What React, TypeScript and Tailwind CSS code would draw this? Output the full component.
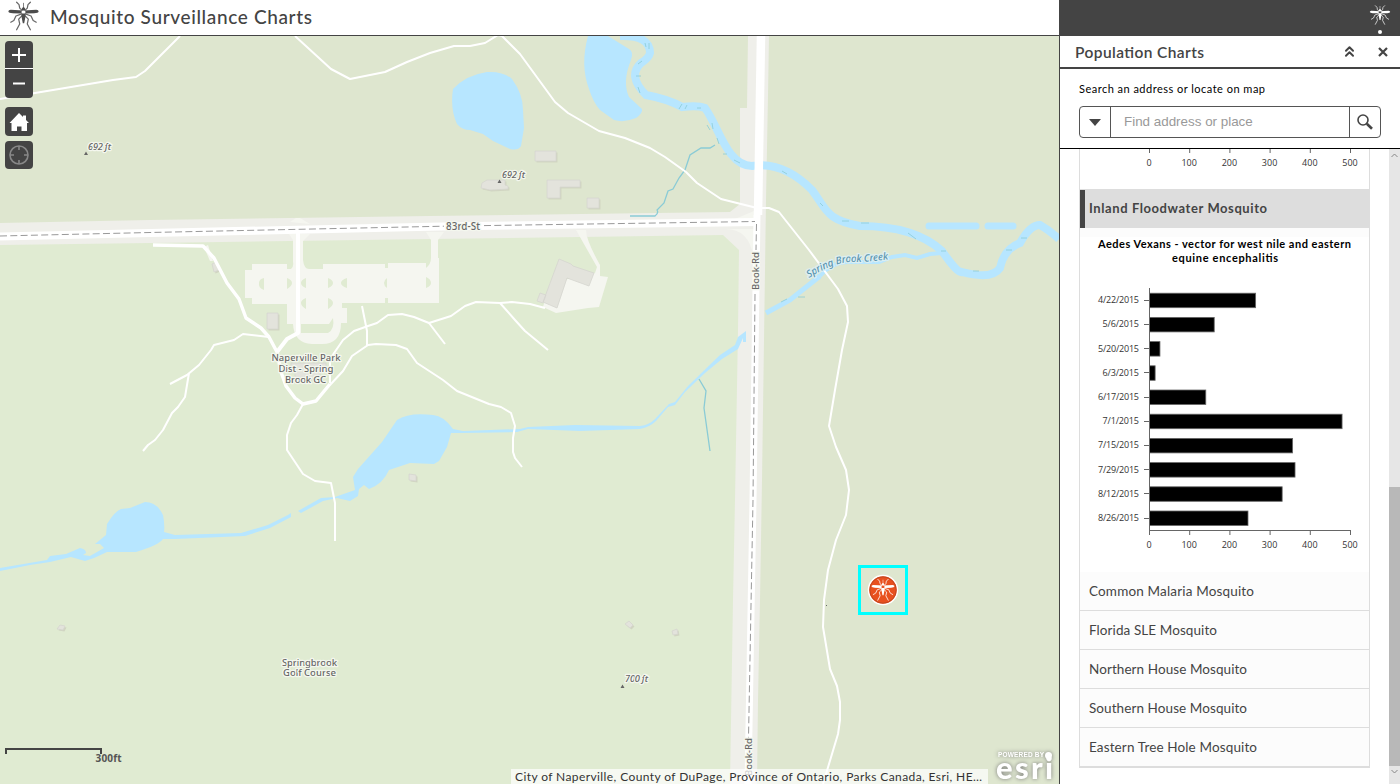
import { ChevronsUp } from "lucide-react";

const COUNTS = [
  { date: "4/22/2015", count: 264 },
  { date: "5/6/2015", count: 161 },
  { date: "5/20/2015", count: 26 },
  { date: "6/3/2015", count: 14 },
  { date: "6/17/2015", count: 140 },
  { date: "7/1/2015", count: 479 },
  { date: "7/15/2015", count: 356 },
  { date: "7/29/2015", count: 362 },
  { date: "8/12/2015", count: 330 },
  { date: "8/26/2015", count: 245 },
];

const TICKS = [0, 100, 200, 300, 400, 500];

const SPECIES = [
  { name: "Common Malaria Mosquito", width: 165 },
  { name: "Florida SLE Mosquito", width: 128 },
  { name: "Northern House Mosquito", width: 158 },
  { name: "Southern House Mosquito", width: 158 },
  { name: "Eastern Tree Hole Mosquito", width: 168 },
];

const PATHS = [
  "M0 99 L35 93 L113 80 L136 77 L145 71 L180 36",
  "M295 36 L331 69 L350 79 L385 72 L407 62 L430 53 L454 46 L470 46 L485 43 L498 35 L502 36 L520 54 L555 102 L568 113 L599 131 L625 138 L650 148 L665 157 L686 172 L697 183 L721 199 L757 208 L769 208 L779 212 L809 250 L838 289 L847 306 L848 322 L842 350 L835 390 L829 426 L836 447 L846 470 L849 490 L846 515 L836 540 L828 570 L824 600 L823 627 L830 669 L837 686 L840 702 L840 720 L838 734 L823 784",
  "M269 337 L243 334 L234 340 L214 345 L211 350 L199 365 L187 375 L170 384",
  "M189 373 L185 397 L178 407 L172 413 L163 430 L155 440 L148 445 L143 451",
  "M303 404 L297 415 L291 423 L287 435 L287 450 L303 474 L315 481 L331 483 L335 503 L335 541",
  "M330 383 L330 359 L343 340 L354 331 L368 326 L377 323 L388 315 L402 314 L414 317 L429 323 L451 316 L465 306 L476 302 L500 303 L512 302 L530 304 L545 308",
  "M330 385 L343 371 L352 356 L368 345 L376 344 L396 345 L407 349 L417 363 L443 380 L457 391 L489 404 L501 407 L511 413 L515 426 L513 438 L513 452 L515 458 L522 467",
  "M362 306 L367 331 L367 345",
  "M429 323 L445 344",
  "M500 303 L515 320 L525 331 L548 350",
];

export default function App() {
  return (
    <div className="flex h-[784px] w-[1400px] overflow-hidden bg-white font-['Lato',sans-serif] text-[#444]">
      <div className="flex w-[1059px] flex-col">
        <header className="flex h-9 items-center border-b border-[#444] pl-2">
          <Mosquito className="-mt-1 h-[30px] w-[31px] text-[#4c4c4c]" />
          <h1 className="-mt-0.5 ml-[11px]">
            <Label width={262} text="Mosquito Surveillance Charts" className="h-6 text-[19px]" baseline={18.5} weight={500} />
          </h1>
        </header>
        <MapView />
      </div>
      <aside className="flex w-[341px] flex-col border-l border-[#444]">
        <div className="flex h-9 shrink-0 justify-end bg-[#444] pr-[9px]">
          <div className="flex flex-col items-center pt-[5px]">
            <Mosquito className="h-5 w-[22px] text-white" />
            <span className="mt-[5px] h-1 w-1 rounded-full bg-white" />
          </div>
        </div>
        <div className="flex h-[33px] shrink-0 items-center border-b-2 border-[#444] pl-[15px] pr-3">
          <Label width={129} text="Population Charts" className="h-6 grow text-[15.5px]" baseline={18} weight={600} />
          <ChevronsUp className="mr-5 h-[17px] w-[17px]" strokeWidth={2.7} />
          <svg viewBox="0 0 10 10" className="h-2.5 w-2.5" stroke="currentColor" strokeWidth="2.2">
            <path d="M1 1 L9 9 M9 1 L1 9" />
          </svg>
        </div>
        <div className="flex h-20 shrink-0 flex-col border-b border-black pl-[19px] pt-3">
          <Label width={186} text="Search an address or locate on map" className="h-4 text-[11px] text-black" baseline={12} />
          <SearchBox />
        </div>
        <div className="flex min-h-0 grow">
          <div className="ml-[19px] w-[291px]">
            <Accordion />
          </div>
          <Scrollbar />
        </div>
      </aside>
    </div>
  );
}

type LabelProps = { width: number; text: string; className: string; baseline: number; weight?: number };

// single line of text fitted to a fixed advance width
function Label({ width, text, className, baseline, weight = 400 }: LabelProps) {
  return (
    <svg className={`block ${className}`} width={width} fill="currentColor" fontWeight={weight}>
      <text x="0" y={baseline} textLength={width}>{text}</text>
    </svg>
  );
}

function SearchBox() {
  return (
    <div className="mt-[9px] flex h-8 w-[302px] rounded border border-[#555]">
      <div className="flex w-[31px] items-center justify-center border-r border-[#555]">
        <svg viewBox="0 0 12 7" className="h-[7px] w-3" fill="#444"><path d="M0 0 H12 L6 7 Z" /></svg>
      </div>
      <div className="flex grow items-center pl-[13px] font-['Liberation_Sans',sans-serif] text-[13.4px] text-[#999]">
        Find address or place
      </div>
      <div className="flex w-[31px] items-center justify-center border-l border-[#555]">
        <svg viewBox="0 0 16 16" className="h-4 w-4" fill="none" stroke="#444">
          <circle cx="6" cy="6" r="5" strokeWidth="1.6" />
          <path d="M9.8 9.8 L15 14.8" strokeWidth="2.6" />
        </svg>
      </div>
    </div>
  );
}

function Accordion() {
  return (
    <div className="border-x border-b-2 border-[#ddd]">
      <svg className="block h-10 w-full" viewBox="0 149 289 40">
        <XAxis y={148} />
      </svg>
      <div className="flex h-[39px] items-center bg-[#ddd] pt-px">
        <span className="h-[38px] w-[5px] bg-[#444]" />
        <div className="ml-1">
          <Label width={178} text="Inland Floodwater Mosquito" className="h-5 text-[13px]" baseline={14} weight={700} />
        </div>
      </div>
      <Chart />
      {SPECIES.map((s, i) => (
        <div
          key={s.name}
          className={`flex items-center bg-[#fcfcfc] pl-[9px] ${i < SPECIES.length - 1 ? "h-[39px] border-b border-[#ddd]" : "h-[38px]"}`}
        >
          <Label width={s.width} text={s.name} className="h-5 text-[13.5px]" baseline={15} />
        </div>
      ))}
    </div>
  );
}

function XAxis({ y }: { y: number }) {
  return (
    <g fontSize="9" fill="#333" textAnchor="middle" fontFamily="Open Sans">
      {TICKS.map((t) => (
        <g key={t}>
          <path d={`M${69.5 + t * 0.402} ${y} v5`} stroke="#666" />
          <text x={69 + t * 0.402} y={y + 18} textLength={t ? 15.5 : 5}>{t}</text>
        </g>
      ))}
    </g>
  );
}

function Chart() {
  return (
    <svg className="block h-[344px] w-full" viewBox="0 228 289 344">
      <rect y="228" width="289" height="9" fill="#fcfcfc" />
      <g fontSize="11" fontWeight="700" fill="#000">
        <text x="18" y="248" textLength="253">Aedes Vexans - vector for west nile and eastern</text>
        <text x="92" y="262" textLength="106">equine encephalitis</text>
      </g>
      {COUNTS.map((c, i) => {
        const y = 300.2 + i * 24.2;
        return (
          <g key={c.date}>
            <text x="59" y={y + 3} fontSize="9" fill="#333" textAnchor="end" fontFamily="Open Sans" textLength={c.date.length * 4.55}>
              {c.date}
            </text>
            <path d={`M64 ${Math.floor(y) + 0.5} h5`} stroke="#666" />
            <rect x="69.5" y={y - 7} width={c.count * 0.402} height="14.5" fill="#000" stroke="#666" strokeWidth="0.8" />
          </g>
        );
      })}
      <path d="M69.5 288 V530.5 H270" fill="none" stroke="#666" />
      <XAxis y={530} />
    </svg>
  );
}

function Scrollbar() {
  return (
    <div className="ml-auto flex w-[11px] flex-col items-center bg-[#e6e6e6]">
      <svg viewBox="0 0 11 12" className="h-3 w-[11px]" fill="none" stroke="#888"><path d="M2.5 8 L5.5 5 L8.5 8" /></svg>
      <div className="mt-[326px] w-full grow bg-[#b8b8b8]" />
      <svg viewBox="0 0 11 18" className="h-[18px] w-[11px]" fill="none" stroke="#888"><path d="M2.5 4 L5.5 7 L8.5 4" /></svg>
    </div>
  );
}

function Mosquito({ className }: { className?: string }) {
  return (
    <svg viewBox="0 0 90 86" className={className} fill="none" stroke="currentColor" strokeLinecap="round" strokeLinejoin="round">
      <MosquitoShape />
    </svg>
  );
}

function MosquitoShape() {
  return (
    <>
      <path d="M45 27 L8 25 Q1 26 1 30 Q2 35 14 35 L45 36 L76 35 Q88 35 89 30 Q89 26 82 25 Z M40 22 Q45 12 50 22 L51 44 L47 64 H43 L39 44 Z" fill="currentColor" stroke="none" />
      <path d="M45 18 V6" strokeWidth="2" />
      <path
        strokeWidth="3.6"
        strokeOpacity="0.85"
        d="M40 26 L34 20 L32 10 L25 3 M50 26 L56 20 L58 10 L65 3 M40 37 L23 43 L17 56 L8 61 M50 37 L67 43 L73 56 L82 61 M41 42 L31 52 L34 66 L25 83 M49 42 L59 52 L56 66 L65 83"
      />
    </>
  );
}

function MapView() {
  return (
    <div className="relative h-[748px] overflow-hidden">
      <BaseMap />
      <div className="absolute left-[5px] top-[5px] flex w-7 flex-col text-white">
        <MapButton className="h-7 rounded-t border-b border-white">
          <path d="M7 14 H21 M14 7 V21" strokeWidth="2" />
        </MapButton>
        <MapButton className="h-[29px] rounded-b">
          <path d="M8 13.500 H20" strokeWidth="2" />
        </MapButton>
        <MapButton className="mt-[9px] h-[29px] rounded">
          <path d="M4.5 15 L14 5 L18 9 V7.5 H21 V12 L24 15 H22 V23 H16.5 V18.5 H12 V23 H6.5 V15 Z" fill="#fff" stroke="none" />
        </MapButton>
        <MapButton className="mt-[5px] h-7 rounded text-[#888]">
          <circle cx="14" cy="14" r="9" strokeWidth="1.6" />
          <path d="M14 5 V9 M14 19 V23 M5 14 H9 M19 14 H23" strokeWidth="1.6" />
        </MapButton>
      </div>
      <div className="absolute bottom-0 right-[71px] flex h-[15px] w-[477px] items-center bg-white/70 pl-1 text-[#333]">
        <Label
          width={467}
          text="City of Naperville, County of DuPage, Province of Ontario, Parks Canada, Esri, HE…"
          className="h-[15px] text-[12px]"
          baseline={12}
        />
      </div>
    </div>
  );
}

function MapButton({ className, children }: { className: string; children: React.ReactNode }) {
  return (
    <button className={`flex w-7 items-center justify-center bg-[#444] ${className}`}>
      <svg viewBox="0 0 28 28" className="h-7 w-7" fill="none" stroke="currentColor">{children}</svg>
    </button>
  );
}

function BaseMap() {
  return (
    <svg viewBox="0 36 1059 748" className="block h-[748px] w-[1059px]" fill="none">
      <rect y="36" width="1059" height="748" fill="#dee6cf" />
      <path d="M0 235 H740 V784 H0 Z" fill="#e0ebd2" />
      <Corridors />
      <Parking />
      <Water />
      <Buildings />
      <g stroke="#fff" strokeWidth="2" strokeLinejoin="round">
        {PATHS.map((d) => (
          <path key={d} d={d} />
        ))}
      </g>
      <Roads />
      <MapLabels />
      <Marker />
      <path d="M6 754 V749 H101 V754" stroke="#444" strokeWidth="2" />
      <text x="95.5" y="762" fontSize="10" fontWeight="700" fill="#555" fontFamily="Open Sans" textLength="26">300ft</text>
      <g fill="#fff" style={{ filter: "drop-shadow(0 0 2px #777)" }} fontFamily="Lato" fontWeight="900">
        <text x="998" y="757" fontSize="6.5" textLength="46" fontFamily="Liberation Sans">POWERED BY</text>
        <text x="996" y="778.5" fontSize="31" textLength="57">esri</text>
        <circle cx="1048.500" cy="755.500" r="3.500" />
      </g>
    </svg>
  );
}

function Corridors() {
  return (
    <>
      <path
        d="M0 223 L150 220 L430 216 L730 212 L740 204 V108 H747 L748 36 H769 L768 95 L766 200 L764 340 L762 480 L760 600 L758 700 L757 784 H730 L733 600 L735 500 L738 330 L739 250 L723 235 L430 239 L150 243 L0 245 Z"
        fill="#efefea"
      />
      <path d="M290 222 L296 218 H300 L310 224 Z M735 219 L754 211 V219 Z M726 229 H754 V260 Q750 229 726 229 Z" fill="#f5f6f0" />
    </>
  );
}

function Parking() {
  return (
    <g fill="#f5f6f0">
      <path d="M252 264 H287 V269 H291 Q294 266 293 262 V240 L289 234 H310 L303 241 V260 Q304 269 309 269 H323 V264 H385 V263 H426 V268 Q431 264 431 258 V240 L426 232 H444 L438 240 V258 H439 V303 H347 V308 H347 V323 H341 Q341 344 322 344 H312 Q294 343 293 324 H287 V304 H252 V298 H245 V270 H252 Z" />
      <g fill="#e0ebd2">
        <path d="M264 278 V290 Q258 288 259 283 Q259 279 264 278 Z M287 278 V289 Q292 286 292 283 Q292 280 287 278 Z M306 278 V288 Q301 286 301 283 Q301 280 306 278 Z M328 278 V288 Q333 286 333 283 Q333 280 328 278 Z M347 278 V288 Q341 286 341 283 Q341 280 347 278 Z M387 278 V288 Q384 286 384 283 Q384 280 387 278 Z M426 277 V288 Q431 286 431 283 Q431 279 426 277 Z" />
        <path d="M306 298 V309 Q301 306 301 303 Q301 300 306 298 Z M328 298 V309 Q333 306 333 303 Q333 300 328 298 Z M301 324 H329 L333 318 Q335 329 328 333 H301 Z M342 303 H347 V308 H342 Z M385 263 H388 V268 H385 Z M385 298 H388 V303 H385 Z" />
      </g>
      <path d="M576 230 H586 Q586 240 600 265 L600 276 L608 277 L599 307 L588 308 L556 313 L543 307 L550 283 L595 273 L597 267 Z" />
      <path d="M208 245 L213 261 L210 261 L204 247 Z" />
    </g>
  );
}

function Water() {
  return (
    <>
      <g fill="#b7e6ff">
        <path d="M453 89 Q466 75 487 72 Q503 71 512 79 Q523 94 523 110 L524 128 L521 146 Q518 151 510 149 L493 141 L483 134 L470 130 Q462 130 457 124 Q450 109 453 89 Z" />
        <path d="M588 36 H608 L629 49 Q634 52 631 60 Q622 82 629 97 L642 109 Q643 113 636 118 Q624 123 614 120 L600 110 Q593 102 589 89 Q580 65 588 36 Z" />
        <path d="M106 535 L107 524 Q115 511 121 509 L130 508 L145 502 Q157 502 163 515 Q165 525 164 532 L175 535 L241 533 L268 525 L288 515 L291 513 V517 L270 528 L245 536 L175 539 H163 Q159 545 136 552 H107 L94 558 L85 561 L71 557 L50 562 L30 565 L0 571 V568 L47 560 L50 556 L66 554 L80 548 Q86 549 86 553 L83 555 L90 556 L104 548 L100 544 L95 544 Z" />
        <path d="M298 511 L321 498 L335 497 L355 490 L353 477 L358 469 L382 442 L397 420 Q409 412 433 415 Q444 416 453 429 L463 431 L520 429 L528 427 L575 425 L640 426 Q649 425 655 419 L669 404 L675 402 L688 386 L720 355 L735 345 L738 337 L746 331 V342 H743 V338 L738 349 L722 359 L705 373 L685 392 L675 405 L668 407 L656 421 Q650 427 640 429 L580 431 L528 429 L517 432 L463 433 L451 433 L447 447 L439 461 L434 464 L410 463 L389 470 Q383 484 369 489 L364 485 L359 489 L358 496 L350 501 L337 498 L323 501 L301 513 Z" />
      </g>
      <g stroke="#b7e6ff">
        <path d="M620 36 Q650 35 650 53 Q649 58 641 63 Q627 76 646 95 Q668 99 682 107 Q698 105 705 108 C719 127 727 166 752 166 Q783 161 812 190 C827 210 826 220 860 226 Q915 226 942 251 Q958 274 962 272 Q992 280 1000 268 Q1004 249 1020 243 Q1030 225 1040 225 Q1049 230 1059 239" strokeWidth="8" />
        <path d="M929 226 H976 M988 226 H1013" strokeWidth="7" strokeLinecap="round" />
        <path d="M766 313 L790 300 L820 276" strokeWidth="5" />
        <path d="M820 276 Q833 261 850 262 L879 262 L892 257 L905 255 L917 258 L930 254 L942 253" strokeWidth="4" />
      </g>
      <g stroke="#8acbd6" strokeWidth="1.3">
        <path d="M630 216 H655 Q659 213 657 210 L664 203 L668 191 L673 189 L679 178 L685 170 L690 155 L701 148 H710 L715 145 M699 379 L706 391 L704 408 L710 451" />
        <path d="M649 49 V43 M646 47 L645 43 M638 64 L642 61 M636 76 H641 M640 93 L638 87 M679 109 L682 104 M685 109 L687 105 M697 108 H701 M707 125 L710 130 M713 129 L712 123 M719 144 L717 138 M723 154 H727 M734 160 L740 163 M782 171 L787 174 M820 203 L823 206 M842 221 H849 M861 223 H869 M908 233 L916 239 M941 251 H946 M973 271 H979 M1006 250 H1012 M1021 238 H1027 M798 297 H805 M781 302 L787 299" strokeWidth="0.8" />
      </g>
    </>
  );
}

function Buildings() {
  return (
    <>
      <g fill="#d1d5c2" transform="translate(1.5 1.5)">
        <path d="M535 151 H556 V161 H535 Z M482 183 L487 180 H505 V185 L508 186 V189 L490 190 L481 188 Z M547 180 H580 V187 H560 V198 H547 Z M587 198 H599 V208 H587 Z M267 313 H278 V329 H267 Z" />
        <path d="M60 625 L65 626 L63 630 L57 629 Z M409 474 L416 475 L416 481 L409 480 Z M672 631 L677 629 L678 634 L673 635 Z M625 624 L629 621 L633 625 L630 628 Z M212 264 L216 262 L219 270 L214 272 Z" />
      </g>
      <g fill="#e3e3dc" stroke="#d6d6cf" strokeWidth="0.8">
        <path d="M535 151 H556 V161 H535 Z M482 183 L487 180 H505 V185 L508 186 V189 L490 190 L481 188 Z M547 180 H580 V187 H560 V198 H547 Z M587 198 H599 V208 H587 Z M267 313 H278 V329 H267 Z" />
        <path d="M559 259 L571 264 L573 266 L594 273 L589 286 L567 278 L557 308 L543 302 Z M540 293 L546 295 L543 303 L537 301 Z" />
        <path d="M291 363 H326 V372 H320 V380 H295 V372 H291 Z" />
        <path d="M60 625 L65 626 L63 630 L57 629 Z M409 474 L416 475 L416 481 L409 480 Z M672 631 L677 629 L678 634 L673 635 Z M625 624 L629 621 L633 625 L630 628 Z M212 264 L216 262 L219 270 L214 272 Z" />
      </g>
    </>
  );
}

function Roads() {
  return (
    <>
      <g stroke="#fff" strokeLinejoin="round">
        <path d="M0 236.5 L150 233 L440 226.5 L757 222" strokeWidth="8" />
        <path d="M761 36 L758 215" strokeWidth="8.5" />
        <path d="M757 215 L753 500 L748 784" strokeWidth="7" />
        <path d="M298 232 V333 L287 339 L277 352" strokeWidth="4" />
        <path d="M153 245 L203 246 L214 258 L227 283 L239 299 L246 318 L261 328 L269 337 L277 352 L281 372 L286 386 L295 398 L303 404 L316 401 L330 384" strokeWidth="3.4" />
      </g>
      <g stroke="#999" strokeDasharray="7 3.3">
        <path d="M0 236 L150 232.5 L444 226.2" />
        <path d="M484 225.6 L755 221.5" />
        <path d="M756.5 224 L756 250" />
        <path d="M755 294 L753 500 L748.5 738" />
      </g>
    </>
  );
}

function MapLabels() {
  return (
    <g fontFamily="Noto Sans" fill="#666" stroke="#f4f7ee" strokeWidth="2.5" paintOrder="stroke" strokeLinejoin="round">
      <g fontSize="9.6" fontWeight="500">
        <text x="446" y="230" fontSize="10" textLength="34">83rd-St</text>
        <text transform="translate(759 290) rotate(-90)" textLength="38">Book-Rd</text>
        <text transform="translate(752 776) rotate(-90)" textLength="38">Book-Rd</text>
        <text x="271.5" y="361" textLength="69">Naperville Park</text>
        <text x="278.5" y="372" textLength="55">Dist - Spring</text>
        <text x="285" y="382.5" textLength="41">Brook GC</text>
        <text x="282" y="665.5" textLength="55">Springbrook</text>
        <text x="283" y="676" textLength="53">Golf Course</text>
      </g>
      <g fontSize="9.3" fontStyle="italic" fontWeight="500">
        <text x="88" y="150" textLength="23">692 ft</text>
        <text x="502" y="178" textLength="23">692 ft</text>
        <text x="625" y="682" textLength="23">700 ft</text>
      </g>
      <path id="creek" d="M809 278 Q832 263 850 262 Q870 262 892 259" fill="none" stroke="none" />
      <text fontSize="10" fontStyle="italic" fontWeight="500" fill="#5b94ae" stroke="#dceff2">
        <textPath href="#creek" textLength="83">Spring Brook Creek</textPath>
      </text>
      <g stroke="none">
        <path d="M84 155 L86 151.5 L88 155 Z M497.5 183 L499.5 179.5 L501.5 183 Z M620.5 688 L622.5 684.5 L624.5 688 Z" />
        <path d="M826 605 h1 v1 h-1 Z" />
      </g>
    </g>
  );
}

function Marker() {
  return (
    <g>
      <rect x="859.5" y="566.5" width="47" height="47" stroke="#00ffff" strokeWidth="3" />
      <circle cx="883" cy="590" r="14.5" fill="#e8501f" stroke="#fff" strokeWidth="1.5" />
      <circle cx="883" cy="590" r="13.2" stroke="#b9441f" strokeWidth="0.8" />
      <g transform="translate(871.2 578.5) scale(0.262)" color="#fff" stroke="#fff" strokeLinecap="round" strokeLinejoin="round">
        <MosquitoShape />
      </g>
    </g>
  );
}
